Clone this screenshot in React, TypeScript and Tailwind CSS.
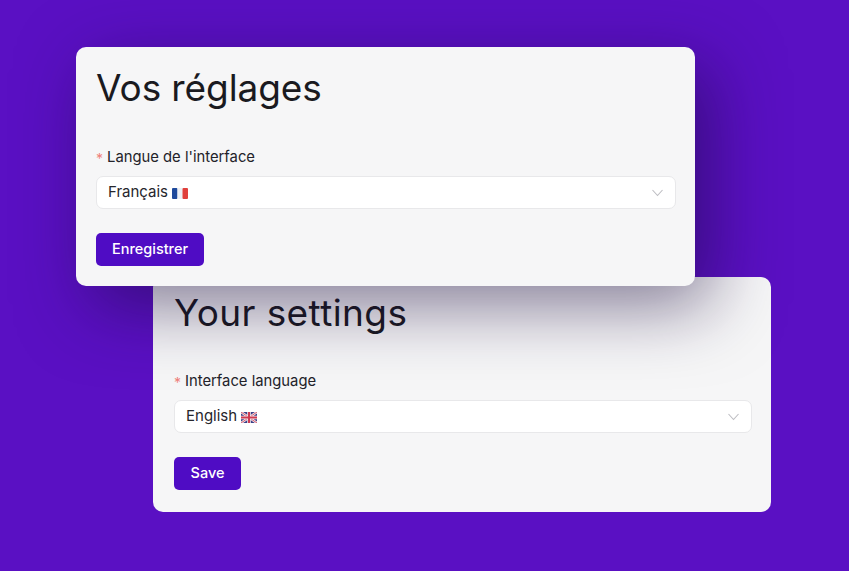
import React from "react";

const France = () => (
  <svg width="16" height="11" viewBox="0 0 16 11" className="ml-1 mt-[2px]" aria-hidden="true">
    <rect x="0" y="0" width="5.500" height="11" rx="1" fill="#1f4a9c" />
    <rect x="5.500" y="0" width="5" height="11" fill="#eef0f4" />
    <rect x="10.500" y="0" width="5.500" height="11" rx="1" fill="#e0403c" />
  </svg>
);

const Britain = () => (
  <svg width="16" height="11" viewBox="0 0 16 11" className="ml-1 mt-[2px]" aria-hidden="true">
    <rect width="16" height="11" rx="1" fill="#3a3f86" />
    <path d="M0 0 16 11M16 0 0 11" stroke="#f1e6ea" strokeWidth="2.400" />
    <path d="M0 0 16 11M16 0 0 11" stroke="#cf3a50" strokeWidth="0.800" />
    <path d="M8 0V11M0 5.500H16" stroke="#f1e6ea" strokeWidth="3.600" />
    <path d="M8 0V11M0 5.500H16" stroke="#cf3a50" strokeWidth="2" />
  </svg>
);

type CardProps = {
  title: string;
  label: string;
  value: string;
  flag: React.ReactNode;
  button: string;
  className: string;
  headClass: string;
  labelClass: string;
  buttonClass: string;
};

const Card = ({ title, label, value, flag, button, className, headClass, labelClass, buttonClass }: CardProps) => (
  <section className={`rounded-[10px] bg-[#f6f6f7] pr-[19px] ${className}`}>
    <h2 className={`font-['Inter',sans-serif] text-[37px] leading-[44px] font-normal text-[#1a1a1f] ${headClass}`}>
      {title}
    </h2>
    <div className={`flex h-5 items-center text-[14.800px] text-[#23232a] ${labelClass}`}>
      <span className="mr-[4px] mt-[3px] text-[14px] text-[#ef7f7a]">*</span>
      <span>{label}</span>
    </div>
    <div className="mt-[9px] flex h-[33px] items-center justify-between rounded-[7px] border border-[#e8e8ea] bg-white pl-[11px] pr-[12px] text-[15px] text-[#26262c]">
      <span className="flex items-center">
        {value}
        {flag}
      </span>
      <svg width="11" height="8" viewBox="0 0 11 8" fill="none" stroke="#bdbdc2" strokeWidth="1.100" aria-hidden="true">
        <path d="M0.500 1l5 5.500 5-5.500" />
      </svg>
    </div>
    <button className={`mt-[24px] block h-[33px] rounded-[5px] bg-[#4f0cc4] pb-[2px] text-center text-[14.500px] font-medium text-white ${buttonClass}`}>
      {button}
    </button>
  </section>
);

export default function App() {
  return (
    <main className="h-[571px] w-[849px] overflow-hidden bg-[#5a10c3] pt-[47px] font-['Inter',sans-serif]">
      <Card
        title="Vos réglages"
        label="Langue de l'interface"
        value="Français"
        flag={<France />}
        button="Enregistrer"
        className="relative z-10 ml-[76px] h-[239px] w-[619px] pl-5 pt-[19px] shadow-[15px_20px_70px_rgba(25,10,60,0.52)]"
        headClass="tracking-[-0.100px]"
        labelClass="mt-[37px]"
        buttonClass="w-[108px]"
      />
      <Card
        title="Your settings"
        label="Interface language"
        value="English"
        flag={<Britain />}
        button="Save"
        className="ml-[153px] -mt-[9px] h-[235px] w-[618px] pl-[21px] pt-[14px]"
        headClass="tracking-[0.400px]"
        labelClass="mt-[36px]"
        buttonClass="w-[67px]"
      />
    </main>
  );
}
